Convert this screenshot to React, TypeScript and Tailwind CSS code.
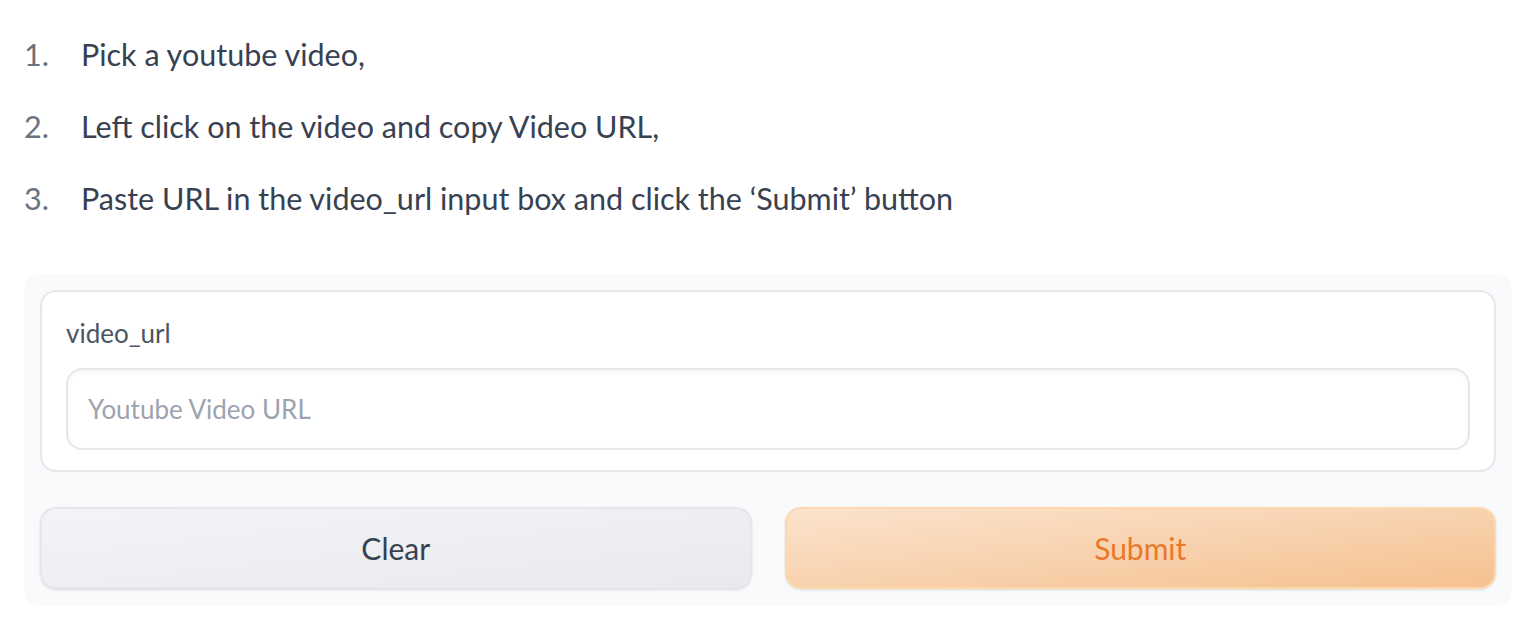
const steps = [
  "Pick a youtube video,",
  "Left click on the video and copy Video URL,",
  "Paste URL in the video_url input box and click the \u2018Submit\u2019 button",
]

export default function App() {
  return (
    <div className="min-h-screen bg-white font-['Lato',sans-serif] text-[#374151]">
      <div className="px-6 pt-[33px]">
        <ol className="flex flex-col gap-[30px] text-[30.5px] leading-[42px]">
          {steps.map((s, i) => (
            <li key={i} className="flex">
              <span className="w-[57px] shrink-0 text-[#6b7280]">{i + 1}.</span>
              <span>{s}</span>
            </li>
          ))}
        </ol>

        <div className="mt-[55px] rounded-2xl bg-[#f9fafb] px-4 pt-4 pb-[17px]">
          <div className="rounded-2xl border-2 border-[#e5e7eb] bg-white px-6 pt-[26px] pb-[20px]">
            <label className="block text-[26px] leading-[30px] text-[#4b5563]">video_url</label>
            <input
              placeholder="Youtube Video URL"
              className="mt-[20px] h-[82px] w-full rounded-2xl border-2 border-[#e5e7eb] bg-white px-5 text-[26px] text-[#374151] shadow-[inset_0_2px_4px_rgba(0,0,0,0.05)] outline-none placeholder:text-[#9ca3af]"
            />
          </div>
          <div className="mt-[35px] grid grid-cols-2 gap-[33px]">
            <button className="h-[82px] rounded-2xl border-2 border-[#e5e7eb] bg-gradient-to-br from-[#f3f4f6] to-[#e9eaee] text-[30px] text-[#374151] shadow-sm">
              Clear
            </button>
            <button className="h-[82px] rounded-2xl border-2 border-[#fed7aa] bg-gradient-to-br from-[#fbe3cd] to-[#f5c190] text-[30px] text-[#e8792b] shadow-sm">
              Submit
            </button>
          </div>
        </div>
      </div>
    </div>
  )
}
